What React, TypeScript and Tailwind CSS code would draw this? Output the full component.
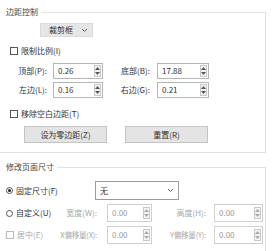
import React from 'react';

const font = { fontFamily: '"Noto Sans CJK SC", "Noto Sans", sans-serif' };

const Chevron = () => (
  <svg width="7" height="5" viewBox="0 0 7 5" className="shrink-0">
    <path d="M1 1 L3.5 3.5 L6 1" fill="none" stroke="#666" strokeWidth="1" />
  </svg>
);

const Spin = ({ disabled }: { disabled?: boolean }) => (
  <div className="flex flex-col w-[7px] h-[12px] border border-[#c8c8c8] bg-[#f4f4f4] items-center justify-around">
    <svg width="5" height="3" viewBox="0 0 5 3">
      <path d="M0 3 L2.5 0 L5 3 Z" fill={disabled ? '#aaa' : '#555'} />
    </svg>
    <svg width="5" height="3" viewBox="0 0 5 3">
      <path d="M0 0 L2.5 3 L5 0 Z" fill={disabled ? '#aaa' : '#555'} />
    </svg>
  </div>
);

const NumInput = ({ value, w, h, disabled }: { value: string; w: string; h: string; disabled?: boolean }) => (
  <div
    className={`flex items-center justify-between pl-[4px] pr-[1px] border ${w} ${h} ${
      disabled ? 'border-[#cfcfcf] text-[#9a9a9a]' : 'border-[#b5b5b5] text-[#333]'
    } bg-white`}
  >
    <span className="text-[8px] leading-none">{value}</span>
    <Spin disabled={disabled} />
  </div>
);

const Check = ({ disabled }: { disabled?: boolean }) => (
  <div className={`w-[8px] h-[8px] border ${disabled ? 'border-[#bbb]' : 'border-[#555]'} bg-white shrink-0`} />
);

const Radio = ({ checked }: { checked?: boolean }) => (
  <div className="w-[7px] h-[7px] rounded-full border border-[#555] bg-white flex items-center justify-center shrink-0">
    {checked && <div className="w-[3px] h-[3px] rounded-full bg-[#222]" />}
  </div>
);

const Btn = ({ children }: { children: React.ReactNode }) => (
  <div className="w-[83px] h-[17px] border border-[#c4c4c4] bg-[#e4e4e4] flex items-center justify-center text-[8px]">
    {children}
  </div>
);

export default function App() {
  return (
    <div className="w-[272px] h-[251px] bg-white text-[#333] text-[8px] leading-none overflow-hidden" style={font}>
      {/* margin group */}
      <div className="pt-[6px] pr-[6px]">
        <div className="flex items-center h-[12px]">
          <span className="ml-[6px] mr-[3px] text-[#444]">边距控制</span>
          <div className="flex-1 h-px bg-[#e2e2e2]" />
        </div>
        <div className="border-r border-b border-[#e2e2e2] h-[141px] -mt-[6px] pt-[6px]">
          <div className="ml-[40px] mt-[5px] w-[53px] h-[14px] bg-[#e6e6e6] border border-[#dadada] flex items-center justify-between pl-[8px] pr-[4px]">
            <span>裁剪框</span>
            <Chevron />
          </div>
          <div className="flex items-center gap-[3px] ml-[10px] mt-[10px]">
            <Check />
            <span>限制比例(I)</span>
          </div>
          <div className="flex items-center mt-[8px] h-[16px]">
            <span className="w-[47px] text-right">顶部(P):</span>
            <div className="ml-[6px]">
              <NumInput value="0.26" w="w-[50px]" h="h-[16px]" />
            </div>
            <span className="w-[47px] text-right">底部(B):</span>
            <div className="ml-[7px]">
              <NumInput value="17.88" w="w-[52px]" h="h-[16px]" />
            </div>
          </div>
          <div className="flex items-center mt-[3px] h-[16px]">
            <span className="w-[47px] text-right">左边(L):</span>
            <div className="ml-[6px]">
              <NumInput value="0.16" w="w-[50px]" h="h-[16px]" />
            </div>
            <span className="w-[47px] text-right">右边(G):</span>
            <div className="ml-[7px]">
              <NumInput value="0.21" w="w-[52px]" h="h-[16px]" />
            </div>
          </div>
          <div className="flex items-center gap-[3px] ml-[10px] mt-[12px]">
            <Check />
            <span>移除空白边距(T)</span>
          </div>
          <div className="flex items-center gap-[18px] ml-[24px] mt-[8px]">
            <Btn>设为零边距(Z)</Btn>
            <Btn>重置(R)</Btn>
          </div>
        </div>
      </div>

      {/* page size group */}
      <div className="pt-[8px] pr-[6px]">
        <div className="flex items-center h-[12px]">
          <span className="ml-[6px] mr-[3px] text-[#444]">修改页面尺寸</span>
          <div className="flex-1 h-px bg-[#e2e2e2]" />
        </div>
        <div className="pt-[8px] border-r border-[#e2e2e2] -mt-[6px] h-[90px]">
          <div className="flex items-center h-[19px] mt-[6px]">
            <div className="flex items-center gap-[3px] ml-[6px] w-[89px]">
              <Radio checked />
              <span>固定尺寸(F)</span>
            </div>
            <div className="w-[84px] h-[19px] border border-[#9c9c9c] bg-white flex items-center justify-between pl-[4px] pr-[4px]">
              <span>无</span>
              <Chevron />
            </div>
          </div>
          <div className="flex items-center h-[18px] mt-[4px]">
            <div className="flex items-center gap-[3px] ml-[6px] w-[50px]">
              <Radio />
              <span>自定义(U)</span>
            </div>
            <span className="w-[41px] flex justify-end whitespace-nowrap text-[#a8a8a8]">宽度(W):</span>
            <div className="ml-[10px]">
              <NumInput value="0.00" w="w-[45px]" h="h-[18px]" disabled />
            </div>
            <span className="w-[54px] flex justify-end whitespace-nowrap text-[#a8a8a8]">高度(H):</span>
            <div className="ml-[8px]">
              <NumInput value="0.00" w="w-[49px]" h="h-[18px]" disabled />
            </div>
          </div>
          <div className="flex items-center h-[18px] mt-[4px]">
            <div className="flex items-center gap-[3px] ml-[6px] w-[42px] text-[#a8a8a8]">
              <Check disabled />
              <span>居中(E)</span>
            </div>
            <span className="w-[49px] flex justify-end whitespace-nowrap text-[7.5px] tracking-[-0.2px] text-[#a8a8a8]">X偏移量(X):</span>
            <div className="ml-[10px]">
              <NumInput value="0.00" w="w-[45px]" h="h-[18px]" disabled />
            </div>
            <span className="w-[54px] flex justify-end whitespace-nowrap text-[7.5px] tracking-[-0.2px] text-[#a8a8a8]">Y偏移量(Y):</span>
            <div className="ml-[8px]">
              <NumInput value="0.00" w="w-[49px]" h="h-[18px]" disabled />
            </div>
          </div>
        </div>
      </div>
    </div>
  );
}
